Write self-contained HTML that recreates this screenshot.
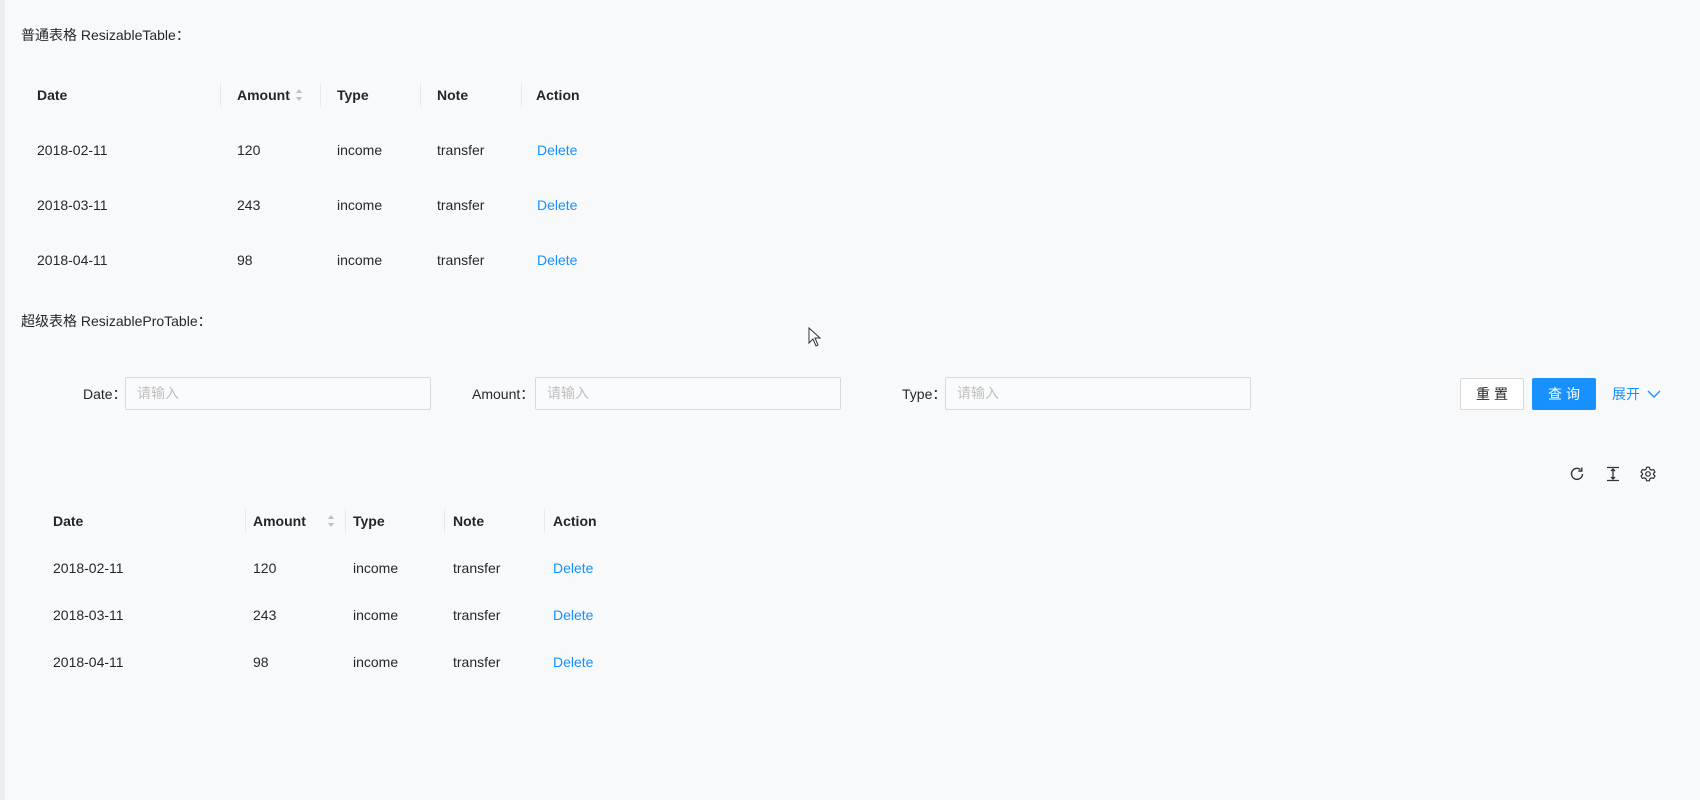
<!DOCTYPE html>
<html><head><meta charset="utf-8"><style>
*{margin:0;padding:0;box-sizing:border-box}
body{width:1700px;height:800px;background:#f8f9fb;font-family:"Liberation Sans","Noto Sans CJK SC",sans-serif;font-size:14px;color:rgba(0,0,0,.85);position:relative;overflow:hidden}
.a{position:absolute;white-space:nowrap;line-height:20px}
.h{font-weight:bold}
.b{color:#1890ff}
.d{position:absolute;width:1px;height:24px;background:#e8e8e8}
.in{position:absolute;height:33px;border:1px solid #d9d9d9;border-radius:2px;background:#fafbfc;color:#bfbfbf;padding-left:11px;line-height:31px;font-size:14px}
.sort{position:absolute;width:8px;height:14px}
</style></head><body>
<div style="position:absolute;left:0;top:0;width:5px;height:800px;background:#eceef1"></div>
<div class="a" style="left:21px;top:25px">普通表格 ResizableTable：</div>

<div class="a h" style="left:37px;top:85px">Date</div>
<div class="a h" style="left:237px;top:85px">Amount</div>
<svg class="sort" style="left:295px;top:88px" viewBox="0 0 8 14"><path d="M4 1L7 5H1Z" fill="#bfbfbf"/><path d="M4 13L7 9H1Z" fill="#bfbfbf"/></svg>
<div class="a h" style="left:337px;top:85px">Type</div>
<div class="a h" style="left:437px;top:85px">Note</div>
<div class="a h" style="left:536px;top:85px">Action</div>
<div class="d" style="left:220px;top:83px"></div>
<div class="d" style="left:320px;top:83px"></div>
<div class="d" style="left:420px;top:83px"></div>
<div class="d" style="left:521px;top:83px"></div>

<div class="a" style="left:37px;top:140px">2018-02-11</div><div class="a" style="left:237px;top:140px">120</div><div class="a" style="left:337px;top:140px">income</div><div class="a" style="left:437px;top:140px">transfer</div><div class="a b" style="left:537px;top:140px">Delete</div>
<div class="a" style="left:37px;top:195px">2018-03-11</div><div class="a" style="left:237px;top:195px">243</div><div class="a" style="left:337px;top:195px">income</div><div class="a" style="left:437px;top:195px">transfer</div><div class="a b" style="left:537px;top:195px">Delete</div>
<div class="a" style="left:37px;top:250px">2018-04-11</div><div class="a" style="left:237px;top:250px">98</div><div class="a" style="left:337px;top:250px">income</div><div class="a" style="left:437px;top:250px">transfer</div><div class="a b" style="left:537px;top:250px">Delete</div>

<div class="a" style="left:21px;top:311px">超级表格 ResizableProTable：</div>
<svg style="position:absolute;left:808px;top:327px" width="14" height="20" viewBox="0 0 14 20"><path d="M1 1V16L5 12L8 19L10 18L7 11H12Z" fill="#fff" stroke="#333" stroke-width="1"/></svg>

<div class="a" style="left:83px;top:384px">Date：</div>
<div class="in" style="left:125px;top:377px;width:306px">请输入</div>
<div class="a" style="left:472px;top:384px">Amount：</div>
<div class="in" style="left:535px;top:377px;width:306px">请输入</div>
<div class="a" style="left:902px;top:384px">Type：</div>
<div class="in" style="left:945px;top:377px;width:306px">请输入</div>

<div style="position:absolute;left:1460px;top:378px;width:64px;height:32px;border:1px solid #d9d9d9;border-radius:2px;background:#fff;text-align:center;line-height:30px;letter-spacing:4px;padding-left:4px">重置</div>
<div style="position:absolute;left:1532px;top:378px;width:64px;height:32px;border-radius:2px;background:#1890ff;color:#fff;text-align:center;line-height:32px;letter-spacing:4px;padding-left:4px">查询</div>
<div class="a b" style="left:1612px;top:384px">展开</div>
<svg style="position:absolute;left:1647px;top:388px" width="14" height="12" viewBox="0 0 14 12"><path d="M1 3L7 9L13 3" fill="none" stroke="#1890ff" stroke-width="1.4"/></svg>

<svg style="position:absolute;left:1569px;top:466px" width="16" height="16" viewBox="0 0 16 16"><path d="M13.5 8A5.5 5.5 0 1 1 11.5 3.6" fill="none" stroke="#333" stroke-width="1.4"/><path d="M12.8 1.5V5H9.3" fill="none" stroke="#333" stroke-width="1.4"/></svg>
<svg style="position:absolute;left:1605px;top:466px" width="16" height="16" viewBox="0 0 16 16"><path d="M2 1.5H14M2 14.5H14M8 3V13M6 5L8 3L10 5M6 11L8 13L10 11" fill="none" stroke="#333" stroke-width="1.3"/></svg>
<svg style="position:absolute;left:1640px;top:466px" width="16" height="16" viewBox="0 0 16 16"><path d="M6.6 1.2H9.4L9.9 3.2L11.6 4.2L13.6 3.6L15 6L13.5 7.4V8.6L15 10L13.6 12.4L11.6 11.8L9.9 12.8L9.4 14.8H6.6L6.1 12.8L4.4 11.8L2.4 12.4L1 10L2.5 8.6V7.4L1 6L2.4 3.6L4.4 4.2L6.1 3.2Z" fill="none" stroke="#333" stroke-width="1.2" stroke-linejoin="round"/><circle cx="8" cy="8" r="2.3" fill="none" stroke="#333" stroke-width="1.2"/></svg>

<div class="a h" style="left:53px;top:511px">Date</div>
<div class="a h" style="left:253px;top:511px">Amount</div>
<svg class="sort" style="left:327px;top:514px" viewBox="0 0 8 14"><path d="M4 1L7 5H1Z" fill="#bfbfbf"/><path d="M4 13L7 9H1Z" fill="#bfbfbf"/></svg>
<div class="a h" style="left:353px;top:511px">Type</div>
<div class="a h" style="left:453px;top:511px">Note</div>
<div class="a h" style="left:553px;top:511px">Action</div>
<div class="d" style="left:245px;top:509px"></div>
<div class="d" style="left:345px;top:509px"></div>
<div class="d" style="left:444px;top:509px"></div>
<div class="d" style="left:544px;top:509px"></div>

<div class="a" style="left:53px;top:558px">2018-02-11</div><div class="a" style="left:253px;top:558px">120</div><div class="a" style="left:353px;top:558px">income</div><div class="a" style="left:453px;top:558px">transfer</div><div class="a b" style="left:553px;top:558px">Delete</div>
<div class="a" style="left:53px;top:605px">2018-03-11</div><div class="a" style="left:253px;top:605px">243</div><div class="a" style="left:353px;top:605px">income</div><div class="a" style="left:453px;top:605px">transfer</div><div class="a b" style="left:553px;top:605px">Delete</div>
<div class="a" style="left:53px;top:652px">2018-04-11</div><div class="a" style="left:253px;top:652px">98</div><div class="a" style="left:353px;top:652px">income</div><div class="a" style="left:453px;top:652px">transfer</div><div class="a b" style="left:553px;top:652px">Delete</div>
</body></html>
